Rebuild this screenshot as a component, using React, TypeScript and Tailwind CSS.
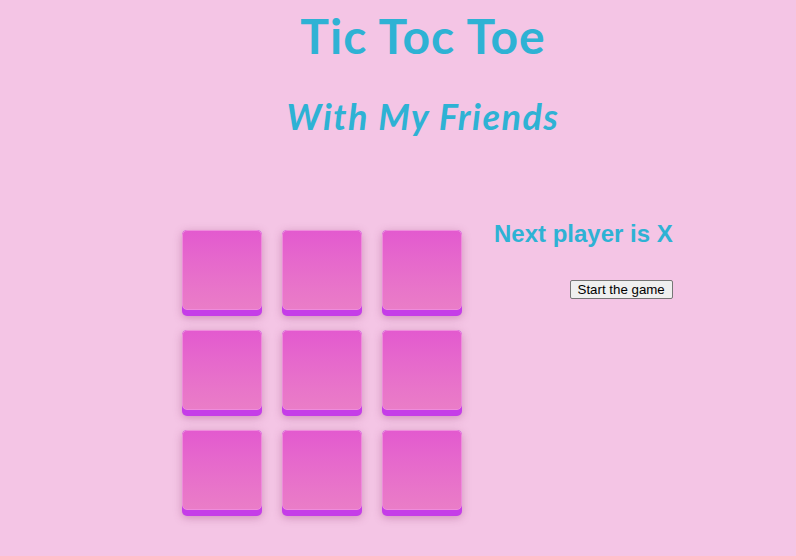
export default function App() {
  const cells = Array.from({ length: 9 });
  return (
    <div className="min-h-[556px] w-full bg-[#f4c5e5] font-['Lato','Open_Sans',sans-serif] text-[#2eb2d4]">
      <div className="flex flex-col items-center pl-[50px] pt-[8px]">
        <h1 className="text-[48px] font-bold leading-[56px] tracking-[1px]">Tic Toc Toe</h1>
        <h2 className="mt-[30px] text-[36px] font-bold italic leading-[44px] tracking-[1.5px]">With My Friends</h2>
      </div>

      <div className="mt-[92px] flex pl-[182px]">
        <div className="grid grid-cols-3 gap-x-[20px] gap-y-[14px]">
          {cells.map((_, i) => (
            <div
              key={i}
              className="h-[86px] w-[80px] rounded-[5px] bg-[#c53ee8] shadow-[0_2px_8px_rgba(140,50,110,0.35)]"
            >
              <div className="h-[80px] w-[80px] rounded-[5px] border border-[#ef8cdc] bg-gradient-to-b from-[#e35acf] to-[#ea7dc7]" />
            </div>
          ))}
        </div>

        <div className="ml-[32px] flex flex-col items-end font-['Liberation_Sans',Arial,sans-serif]">
          <div className="mt-[-10px] text-[24px] font-bold leading-[28px]">Next player is X</div>
          <button className="mt-[32px] rounded-[2px] border border-[#767676] bg-[#efefef] px-[7px] py-[1px] text-[13.3px] leading-[15px] text-black">
            Start the game
          </button>
        </div>
      </div>
    </div>
  );
}
